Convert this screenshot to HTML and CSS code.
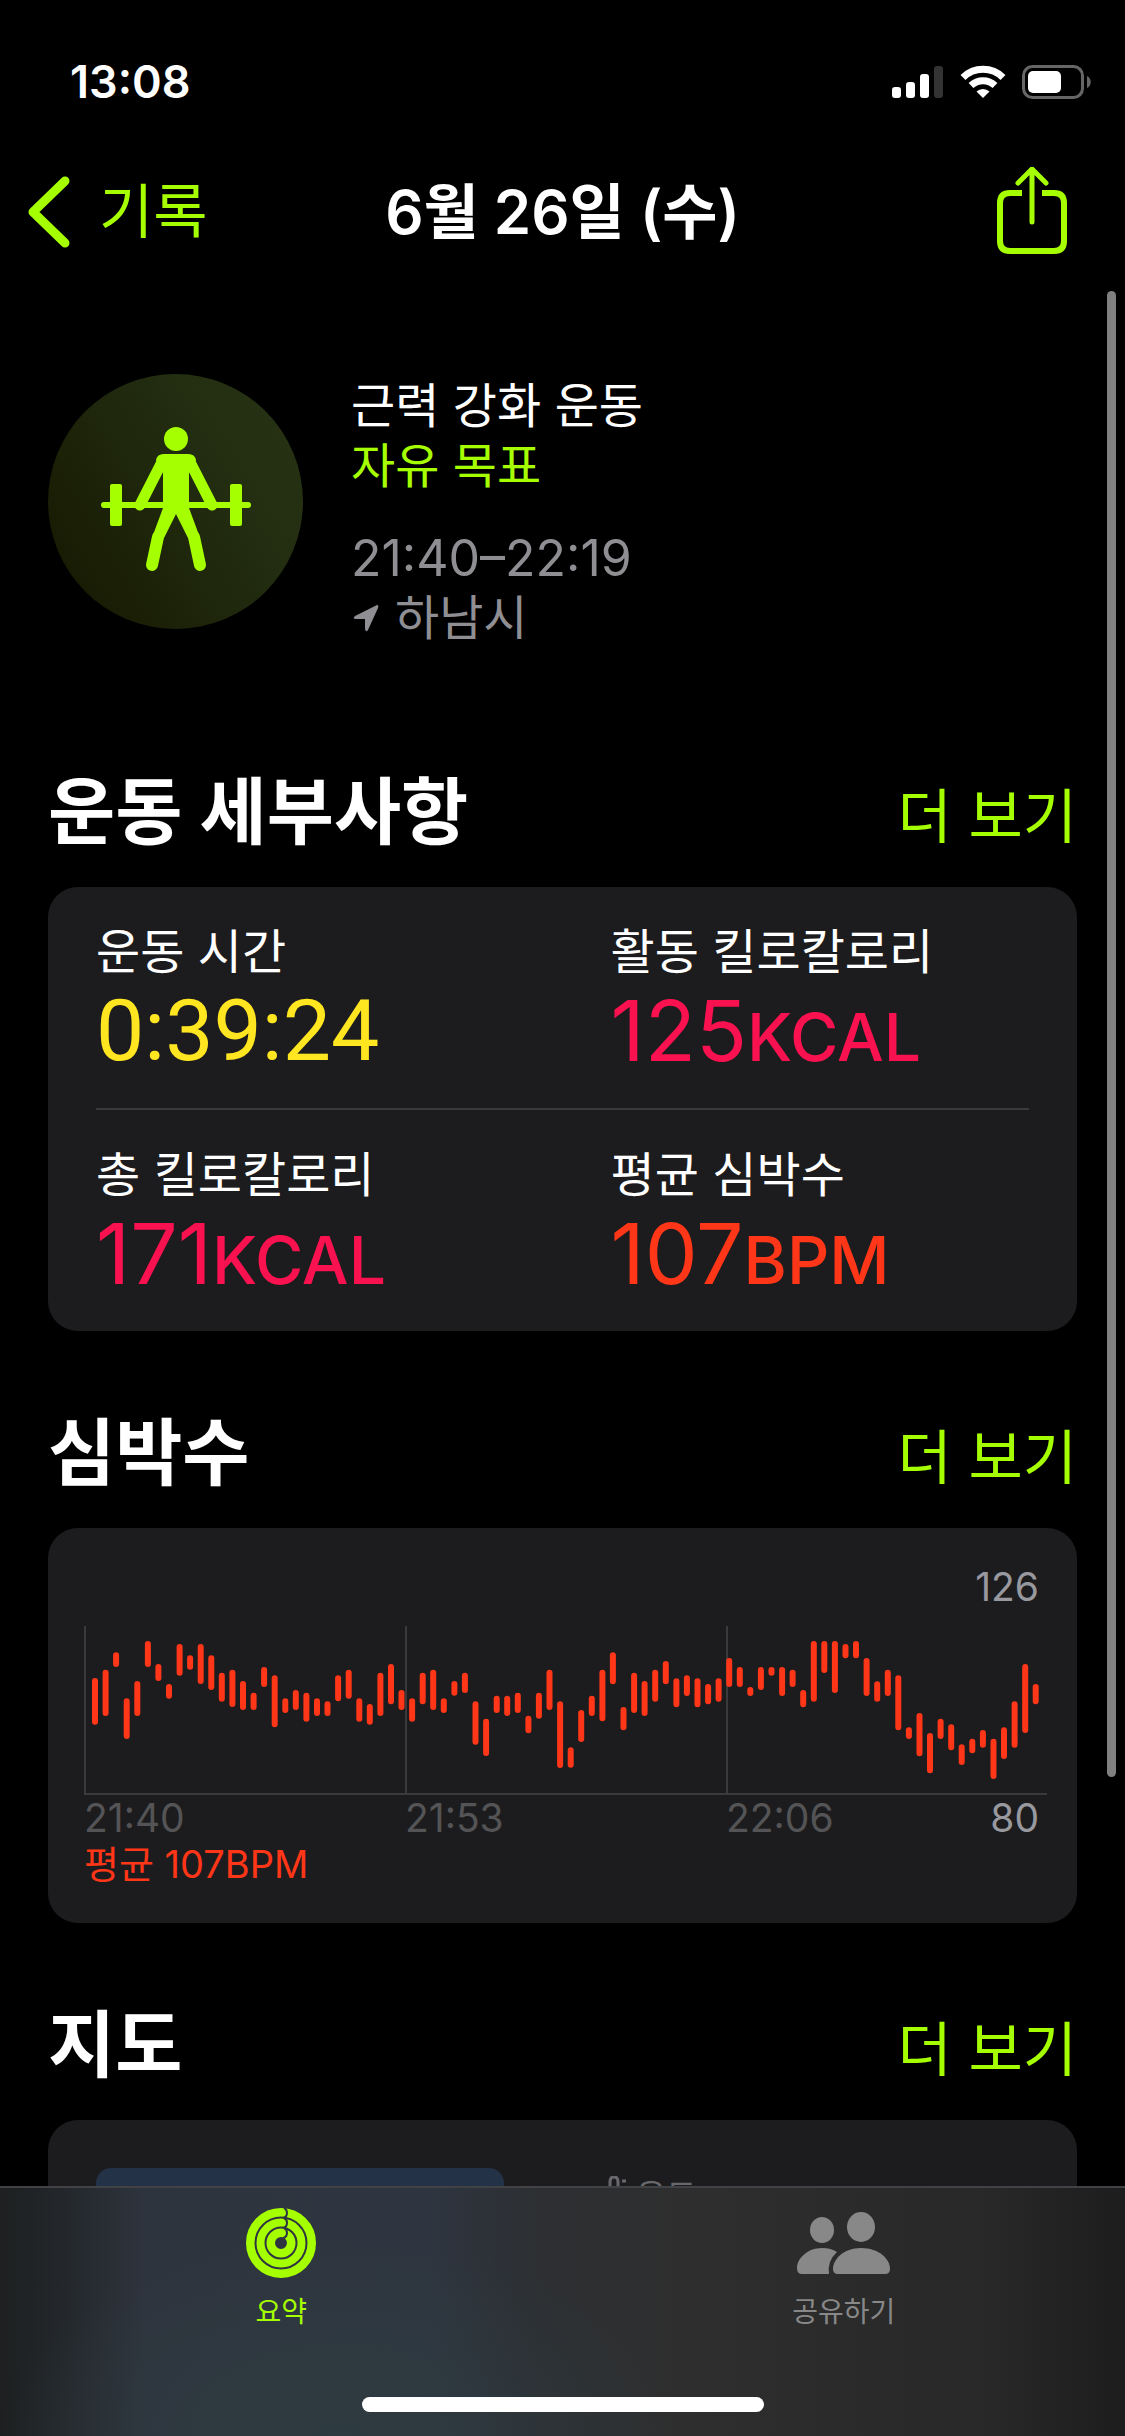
FILE: index.html
```html
<!DOCTYPE html>
<html lang="ko">
<head>
<meta charset="utf-8">
<meta name="viewport" content="width=device-width, initial-scale=1">
<title>6월 26일 (수)</title>
<link rel="stylesheet" href="styles.css">
</head>
<body>
<div class="screen">
  <header>
    <div class="status">
      <time class="clock">13:08</time>
      <div class="indicators">
        <svg width="52" height="34" viewBox="0 0 52 34" aria-hidden="true">
          <g fill="#fff"><rect x="0" y="22" width="9" height="11" rx="3"/><rect x="14" y="17" width="9" height="16" rx="3"/><rect x="28" y="9" width="9" height="24" rx="3"/></g>
          <rect x="42" y="1" width="9" height="32" rx="3" fill="#333"/>
        </svg>
        <svg width="46" height="34" viewBox="0 0 46 34" fill="none" stroke="#fff" stroke-width="7" aria-hidden="true">
          <path d="M3 12.500a28.500 28.500 0 0 1 40 0"/>
          <path d="M11 20.500a17.500 17.500 0 0 1 24 0"/>
          <path d="M16.500 26.500a9.500 9.500 0 0 1 13 0L23 33z" fill="#fff" stroke="none"/>
        </svg>
        <svg width="70" height="34" viewBox="0 0 70 34" aria-hidden="true">
          <rect x="1.500" y="1.500" width="59" height="31" rx="9" fill="none" stroke="#666" stroke-width="3"/>
          <rect x="6" y="6" width="33" height="22" rx="5" fill="#fff"/>
          <path d="M65 11c5 2 5 10 0 12z" fill="#666"/>
        </svg>
      </div>
    </div>
    <nav class="navbar">
      <a class="back" href="#">
        <svg width="44" height="72" viewBox="0 0 44 72" fill="none" stroke="currentColor" stroke-width="9" stroke-linecap="round" stroke-linejoin="round" aria-hidden="true"><path d="M38 5L6 36l32 31"/></svg>
        <span>기록</span>
      </a>
      <h1>6월 26일 (수)</h1>
      <button class="share" type="button" aria-label="공유">
        <svg width="70" height="90" viewBox="0 0 70 90" fill="none" stroke="currentColor" stroke-width="6" aria-hidden="true">
          <path d="M25 26H13Q3 26 3 36V74q0 10 10 10H57q10 0 10-10V36q0-10-10-10H45"/>
          <path d="M35 3V54M21 15L35 1l14 14" transform="translate(0 1)" stroke-width="5" stroke-linecap="round" stroke-linejoin="round"/>
        </svg>
      </button>
    </nav>
  </header>

  <main>
    <section class="hero">
      <svg class="badge" viewBox="0 0 255 255" aria-hidden="true">
        <defs><linearGradient id="disc" x1="0" y1="0.800" x2="1" y2="0.200"><stop offset="0" stop-color="#171a02"/><stop offset="0.750" stop-color="#242f12"/><stop offset="1" stop-color="#263213"/></linearGradient></defs>
        <circle cx="127.500" cy="127.500" r="127.500" fill="url(#disc)"/>
        <g fill="#a6ff00" stroke="#a6ff00" stroke-linecap="round" stroke-linejoin="round">
          <circle cx="128" cy="65" r="12" stroke="none"/>
          <path d="M56 131H200" stroke-width="6"/>
          <rect x="62" y="110" width="12" height="42" rx="2" stroke="none"/>
          <rect x="182" y="110" width="12" height="42" rx="2" stroke="none"/>
          <path d="M115 86L92 131M141 86l23 45" stroke-width="11"/>
          <path d="M116 80h24q7 0 8 6l-7 13v35l10 27-11 3-12-24-12 24-11-3 10-27V99l-7-13q1-6 8-6z" stroke="none"/>
          <path d="M110 163L104 191M146 163L152 191" fill="none" stroke-width="12"/>
        </g>
      </svg>
      <div class="summary">
        <p class="name">근력 강화 운동</p>
        <p class="goal">자유 목표</p>
        <p class="span">21:40–22:19</p>
        <p class="place">
          <svg width="26" height="28" viewBox="0 0 26 28" fill="currentColor" aria-hidden="true"><path d="M24 1Q26 1 25 4L15 26Q13 29 12 25V15H3Q-1 15 2 12z"/></svg>
          <span>하남시</span>
        </p>
      </div>
    </section>

    <section>
      <div class="heading"><h2>운동 세부사항</h2><a href="#">더 보기</a></div>
      <div class="card">
        <dl class="stats">
          <div><dt>운동 시간</dt><dd class="yellow">0:39:24</dd></div>
          <div><dt>활동 킬로칼로리</dt><dd class="pink">125<small>KCAL</small></dd></div>
        </dl>
        <hr>
        <dl class="stats">
          <div><dt>총 킬로칼로리</dt><dd class="pink">171<small>KCAL</small></dd></div>
          <div><dt>평균 심박수</dt><dd class="red">107<small>BPM</small></dd></div>
        </dl>
      </div>
    </section>

    <section>
      <div class="heading"><h2>심박수</h2><a href="#">더 보기</a></div>
      <div class="card heart">
        <p class="peak">126</p>
        <svg class="chart" viewBox="0 0 963 169" role="img" aria-label="심박수">
          <path d="M1 0V168M322 0V168M643 0V168M0 168H963" fill="none" stroke="#3a3a3c" stroke-width="2"/>
          <path id="beats" fill="none" stroke="#ff3617" stroke-width="6" stroke-linecap="round"/>
        </svg>
        <div class="axis"><span>21:40</span><span>21:53</span><span>22:06</span><span class="low">80</span></div>
        <p class="average">평균 107BPM</p>
      </div>
    </section>

    <section>
      <div class="heading"><h2>지도</h2><a href="#">더 보기</a></div>
      <div class="card map">
        <div class="thumb"></div>
        <div class="weather">
          <svg width="20" height="42" viewBox="0 0 20 42" fill="none" stroke="currentColor" stroke-width="3" aria-hidden="true"><path d="M2 26V6q0-5 4-5t4 5V26a8 8 0 1 1-8 0M14 5h4M14 12h4"/></svg>
          <span>온도</span>
        </div>
      </div>
    </section>
  </main>
  <div class="scrollbar"></div>

  <footer class="tabbar">
    <nav class="tabs">
      <a class="active" href="#">
        <svg width="70" height="70" viewBox="0 0 70 70" aria-hidden="true">
          <circle cx="35" cy="35" r="20.500" fill="none" stroke="currentColor" stroke-width="29"/>
          <g fill="none" stroke="#2e3540" stroke-width="2">
            <circle cx="35" cy="35" r="25.500"/><circle cx="35" cy="35" r="15.500"/>
            <path d="M38 0q3 1 3 5t-4 5M38 10q3 1 3 5t-4 5M38 20q3 1 3 5t-4 5"/>
          </g>
        </svg>
        <span>요약</span>
      </a>
      <a href="#">
        <svg width="94" height="70" viewBox="0 0 94 70" fill="currentColor" aria-hidden="true">
          <ellipse cx="25" cy="22" rx="12" ry="13"/>
          <ellipse cx="64" cy="19" rx="14" ry="15"/>
          <path d="M40 44Q34 40 25 40C10 40 0 51 0 60q0 6 5 6H32Q30 53 40 44z"/>
          <path d="M64 40C47 40 36 51 36 61q0 5 5 5H88q5 0 5-5C93 51 82 40 64 40z"/>
        </svg>
        <span>공유하기</span>
      </a>
    </nav>
    <div class="home"></div>
  </footer>
</div>
<script src="chart.js"></script>
</body>
</html>
```
FILE: styles.css
```css
* { box-sizing: border-box; }

body, h1, h2, p, dl, dd { margin: 0; }

body {
  background: #000;
  color: #fff;
  font-family: Inter, "Noto Sans CJK KR", sans-serif;
  font-size: 48px;
  line-height: 60px;
}

a { color: inherit; text-decoration: none; }

svg { display: block; flex: none; }

.screen {
  position: relative;
  display: flex;
  flex-direction: column;
  height: 100vh;
  overflow: hidden;
}

.status {
  display: flex;
  justify-content: space-between;
  align-items: center;
  padding: 52px 33px 20px 70px;
}

.clock { font-size: 45px; font-weight: 600; }

.indicators { display: flex; gap: 16px; }

.navbar {
  display: grid;
  grid-template-columns: 1fr auto 1fr;
  align-items: center;
  height: 160px;
  padding: 0 27px;
  color: #a6ff00;
  font-size: 59px;
}

.back { display: flex; align-items: center; gap: 28px; }

.navbar h1 { color: #fff; font-size: 60px; font-weight: 600; }

.share {
  justify-self: end;
  margin-right: 31px;
  padding: 0;
  border: 0;
  background: none;
  color: inherit;
}

main {
  flex: 1;
  min-height: 0;
  overflow: hidden;
  padding: 82px 48px 0;
}

.hero {
  display: flex;
  align-items: flex-start;
  gap: 48px;
  margin-bottom: 42px;
}

.badge { width: 255px; height: 255px; }

.summary { padding-top: 2px; }

.goal { margin-bottom: 32px; color: #a6ff00; }

.span, .place { color: #8e8e93; }

.span { font-size: 50px; }

.place { display: flex; align-items: center; gap: 16px; padding-left: 2px; }

.heading {
  display: flex;
  justify-content: space-between;
  align-items: baseline;
  padding: 79px 0 32px;
}

.heading h2 { font-size: 73px; font-weight: 700; line-height: 86px; }

.heading a { color: #a6ff00; font-size: 59px; }

.card { border-radius: 30px; background: #1c1c1e; }

.stats { display: grid; grid-template-columns: 1fr 1fr; }

.stats div { padding: 35px 0 35px 48px; }

.stats dt { margin-bottom: 7px; }

.stats dd { font-size: 84px; line-height: 84px; }

.stats small { font-size: 66px; font-weight: 500; line-height: 60px; }

.card hr { height: 2px; margin: 0 48px; border: 0; background: #3a3a3c; }

.stats .yellow { color: #ffe620; font-family: Roboto, sans-serif; font-size: 86px; }
.pink { color: #fa114f; }
.red { color: #ff3617; }

.heart { padding: 34px 30px 36px 36px; font-size: 39px; line-height: 46px; }

.peak { padding: 2px 8px 16px; color: #98989f; text-align: right; }

.chart { width: 100%; height: auto; }

.axis {
  display: grid;
  grid-template-columns: 2fr 2fr 1fr 1fr;
  color: #545456;
}

.axis .low { padding-right: 8px; color: #98989f; text-align: right; }

.average { color: #ff3617; font-size: 38px; }

.map {
  display: grid;
  grid-template-columns: 408px 1fr;
  gap: 104px;
  padding: 48px;
  height: 360px;
}

.thumb { border-radius: 15px; background: #243248; }

.weather {
  display: flex;
  align-items: flex-start;
  gap: 8px;
  padding-top: 8px;
  color: #68686c;
  font-size: 33px;
  line-height: 40px;
}

.scrollbar {
  position: absolute;
  top: 291px;
  right: 9px;
  width: 9px;
  height: 61%;
  border-radius: 5px;
  background: #808080;
}

.tabbar {
  display: flex;
  flex-direction: column;
  justify-content: space-between;
  align-items: center;
  height: 250px;
  padding: 20px 0 24px;
  border-top: 2px solid #404245;
  background:
    radial-gradient(ellipse 30% 80% at 30% 100%, #2e3b40, transparent),
    linear-gradient(90deg, #1d1f20, #24282c 6%, #2e343e 13%, #2e3540 38%, #2d2f32 48%, #2e2e2e 62%, #282828 88%, #1d1d1d);
}

.tabs {
  display: grid;
  grid-template-columns: 1fr 1fr;
  width: 100%;
  color: #888;
  font-size: 28px;
  line-height: 32px;
}

.tabs a { display: flex; flex-direction: column; align-items: center; gap: 18px; }

.tabs .active { color: #a6ff00; }

.home { width: 402px; height: 15px; border-radius: 8px; background: #fff; }
```
FILE: chart.js
```js
// Top and bottom of each heart-rate range, in thirds of a chart unit.
const ranges = [
  [156,296],[131,270],[79,123],[217,339],[165,270],[45,123],[114,165],[174,218],[54,149],[88,131],
  [54,174],[88,192],[140,227],[131,243],[165,252],[200,252],[123,183],[148,304],[217,261],[192,252],
  [200,287],[217,270],[226,270],[148,226],[131,218],[217,287],[234,296],[140,270],[114,235],[192,252],
  [217,287],[140,235],[131,252],[217,261],[165,209],[140,201],[226,356],[278,390],[209,261],[209,270],
  [200,261],[269,322],[200,278],[131,252],[226,426],[364,425],[252,348],[209,270],[131,286],[79,175],
  [243,313],[140,261],[165,270],[131,227],[105,175],[157,244],[148,210],[157,244],[174,235],[157,227],
  [96,183],[123,183],[183,210],[123,192],[123,149],[123,210],[131,183],[192,244],[45,227],[45,141],
  [45,201],[54,97],[45,97],[96,210],[166,227],[131,210],[148,313],[304,339],[261,391],[321,442],
  [278,339],[295,373],[355,417],[338,382],[312,365],[338,459],[304,399],[226,365],[114,321],[174,235]
];
const step = 10.57;
document.getElementById("beats").setAttribute("d", ranges.map(([top, bottom], i) =>
  `M${(11 + i * step).toFixed(1)} ${(top / 3 + 3).toFixed(1)}V${(bottom / 3 - 3).toFixed(1)}`
).join(""));
```
